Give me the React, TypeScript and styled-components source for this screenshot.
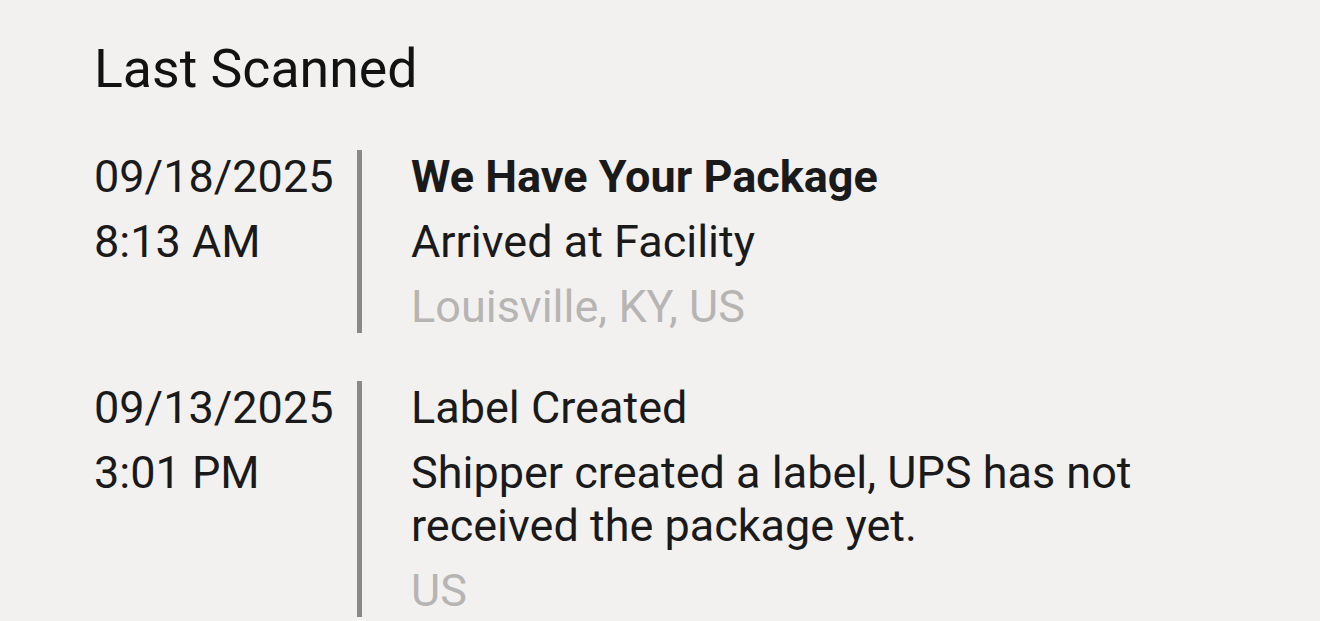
import React from "react";
import styled, { createGlobalStyle } from "styled-components";

const Global = createGlobalStyle`
  html, body { margin: 0; padding: 0; background: #f2f1f0; }
  body { font-family: Roboto, "Noto Sans", "Liberation Sans", sans-serif; -webkit-font-smoothing: antialiased; }
`;

const Page = styled.main`
  padding: 37px 94px 0;
  display: flex;
  flex-direction: column;
  gap: 49px;
`;

const Title = styled.h1`
  margin: 0;
  font-size: 53.6px;
  line-height: 63.6px;
  font-weight: 400;
  color: #121212;
`;

const List = styled.div`
  display: flex;
  flex-direction: column;
  gap: 48px;
`;

const Row = styled.div`
  display: grid;
  grid-template-columns: 263px 5px 1fr;
  column-gap: 0;
`;

const Column = styled.div`
  display: flex;
  flex-direction: column;
  gap: 12px;
`;

const Bar = styled.div`
  background: #8a8888;
`;

const Details = styled(Column)`
  padding-left: 49px;
  max-width: 780px;
`;

const Line = styled.div<{ $tone?: "strong" | "normal" | "muted" }>`
  font-size: 45px;
  line-height: 53px;
  font-weight: ${(p) => (p.$tone === "strong" ? 700 : 400)};
  color: ${(p) => (p.$tone === "muted" ? "#b7b5b4" : "#1a1a1a")};
`;

type Scan = {
  date: string;
  time: string;
  status: string;
  strong?: boolean;
  description: string;
  location: string;
};

const scans: Scan[] = [
  {
    date: "09/18/2025",
    time: "8:13 AM",
    status: "We Have Your Package",
    strong: true,
    description: "Arrived at Facility",
    location: "Louisville, KY, US",
  },
  {
    date: "09/13/2025",
    time: "3:01 PM",
    status: "Label Created",
    description: "Shipper created a label, UPS has not received the package yet.",
    location: "US",
  },
];

export default function App() {
  return (
    <>
      <Global />
      <Page>
        <Title>Last Scanned</Title>
        <List>
          {scans.map((s) => (
            <Row key={s.date + s.time}>
              <Column>
                <Line>{s.date}</Line>
                <Line>{s.time}</Line>
              </Column>
              <Bar />
              <Details>
                <Line $tone={s.strong ? "strong" : "normal"}>{s.status}</Line>
                <Line>{s.description}</Line>
                <Line $tone="muted">{s.location}</Line>
              </Details>
            </Row>
          ))}
        </List>
      </Page>
    </>
  );
}
